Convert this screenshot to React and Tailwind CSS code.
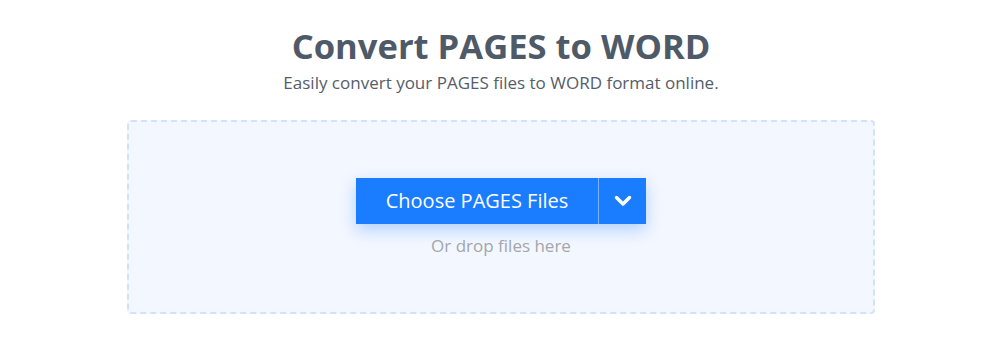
export default function App() {
  return (
    <div className="w-[1000px] h-[339px] bg-white flex flex-col items-center pl-[2px]" style={{ fontFamily: '"Open Sans", "Noto Sans", sans-serif' }}>
      <h1 className="mt-[24px] text-[34.6px] leading-[44px] font-bold text-[#4f5a68]">Convert PAGES to WORD</h1>
      <p className="mt-[3px] text-[17px] leading-[24px] text-[#555d68]">Easily convert your PAGES files to WORD format online.</p>
      <div className="mt-[25px] w-[748px] h-[194px] rounded-[4px] border-2 border-dashed border-[#d3e2fc] bg-[#f3f7ff] flex flex-col items-center">
        <div className="mt-[56px] flex h-[46px] shadow-[0_6px_16px_rgba(26,124,255,0.3)]">
          <button className="w-[242px] h-full bg-[#1a7cff] text-white text-[20px] flex items-center justify-center">Choose PAGES Files</button>
          <div className="w-px h-full bg-[#7db4ff]" />
          <button className="w-[47px] h-full bg-[#1a7cff] flex items-center justify-center">
            <svg width="18" height="12" viewBox="0 0 18 12" fill="none">
              <path d="M2.5 2.5 L9 9 L15.5 2.5" stroke="white" strokeWidth="3.5" strokeLinecap="round" strokeLinejoin="round" />
            </svg>
          </button>
        </div>
        <p className="mt-[10px] text-[17px] leading-[24px] text-[#a3a6ab]">Or drop files here</p>
      </div>
    </div>
  );
}
